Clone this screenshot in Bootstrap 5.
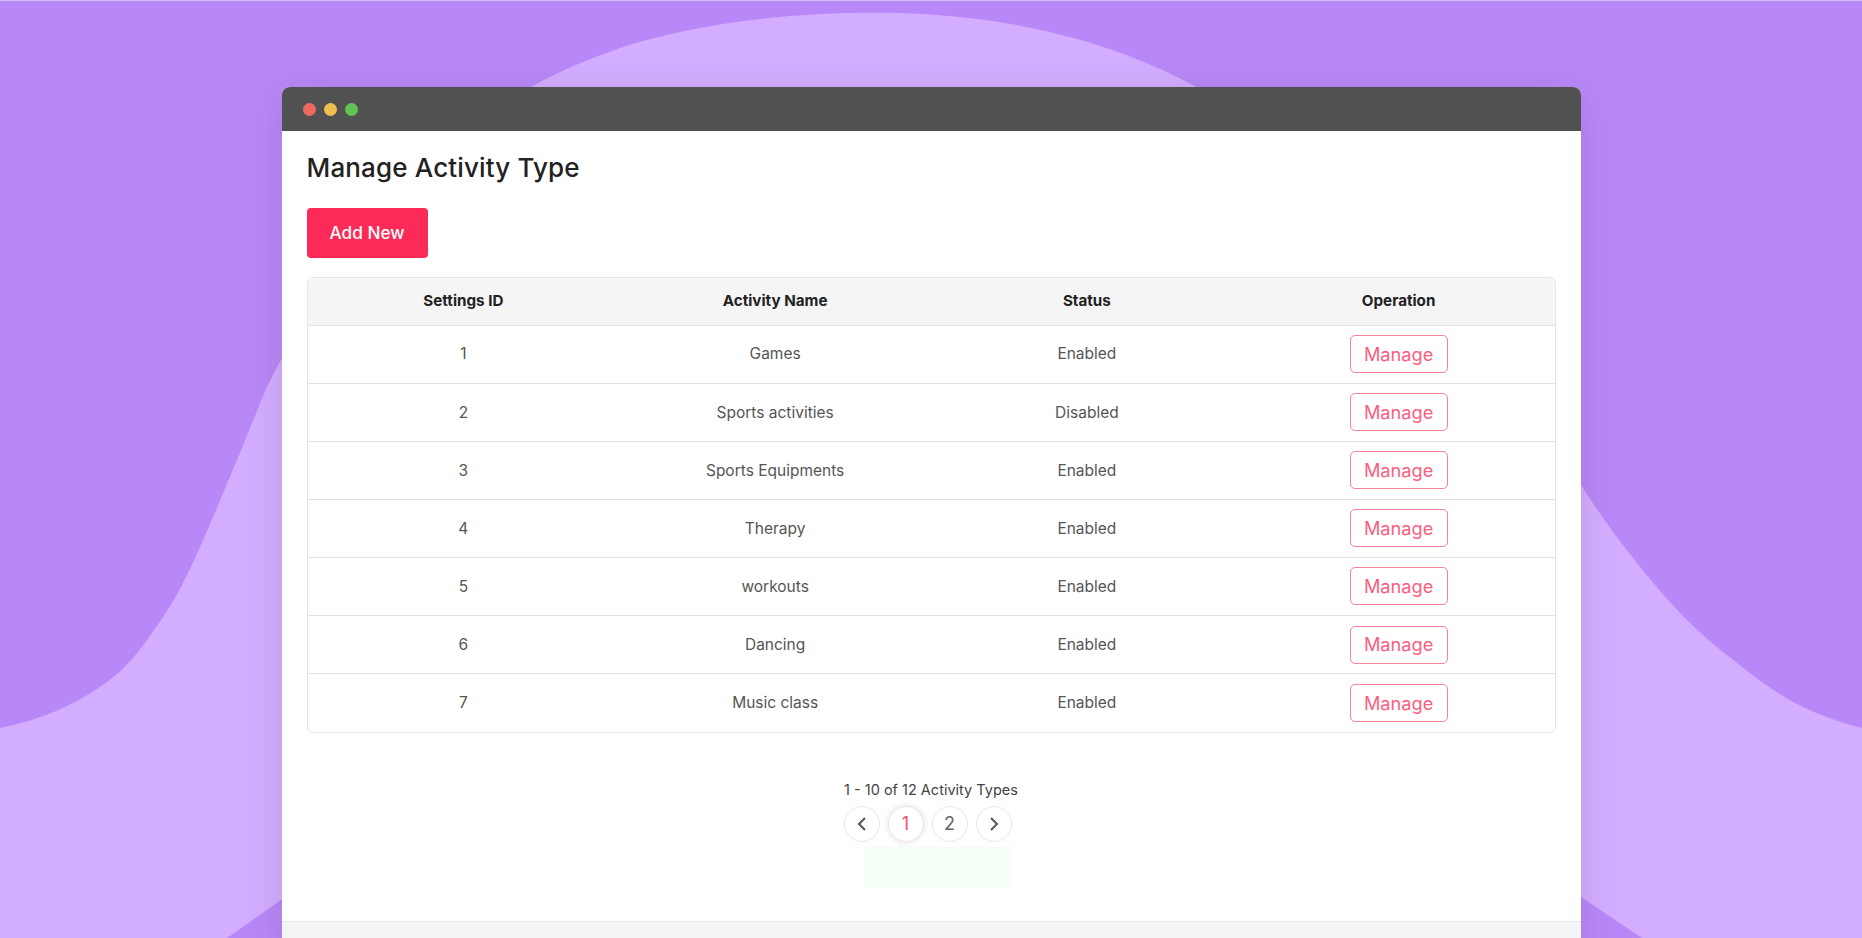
<!DOCTYPE html>
<html lang="en">
<head>
<meta charset="utf-8">
<title>Manage Activity Type</title>
<link href="https://cdn.jsdelivr.net/npm/bootstrap@5.3.0/dist/css/bootstrap.min.css" rel="stylesheet">
<style>
body { font-family: Inter, "Open Sans", sans-serif; background: #b988f8; color: #555; }
.stage { height: 938px; padding-top: 87px; }
.backdrop { position: absolute; top: 0; left: 0; width: 1862px; height: 938px; }
.app-window { width: 1299px; background: #fff; border-radius: 8px 8px 0 0; box-shadow: 0 6px 40px rgba(0,0,0,.11); }
.title-bar { height: 44px; background: #515151; border-radius: 8px 8px 0 0; padding-left: 21px; gap: 8px; }
.dot { width: 13px; height: 13px; border-radius: 50%; }
.dot-r { background: #ee6a5f; } .dot-y { background: #f0bd4f; } .dot-g { background: #60c454; }
.content-area { padding: 0 25px; }
.page-title { font-size: 26px; font-weight: 500; color: #222; margin: 19px 0 0; line-height: 35px; letter-spacing: .15px; }
.btn-add { width: 121px; height: 50px; background: #fb2a57; color: #fff; border: 0; border-radius: 4px; font-size: 17.2px; font-weight: 500; margin-top: 23px; padding: 0; }
.btn-add:hover { background: #fb2a57; color: #fff; }
.table-box { margin-top: 19px; border: 1px solid #e6e6e6; border-radius: 6px; overflow: hidden; }
.activity-table { table-layout: fixed; margin: 0; font-size: 15.5px; color: #555; }
.activity-table th { height: 47px; padding: 0; background: #f5f5f5; color: #222; font-weight: 700; font-size: 15.2px; vertical-align: middle; border-bottom: 1px solid #e6e6e6; }
.activity-table td { height: 58.1px; padding: 0; vertical-align: middle; color: #555; border-bottom: 1px solid #e2e2e2; }
.activity-table tr:last-child td { border-bottom: 0; }
.btn-manage { width: 98px; height: 38px; padding: 0; font-size: 18.2px; line-height: 1; color: #f9607f; background: #fff; border: 1.5px solid #fb8198; border-radius: 5px; }
.btn-manage:hover { color: #f9607f; background: #fff; border-color: #fb8198; }
.pager-block { width: 175px; margin: 47px auto 0; }
.pager-text { font-size: 14.5px; color: #444; line-height: 20px; white-space: nowrap; }
.pager-list { gap: 8px; margin: 6px 0 0; }
.pager-link { width: 36px; height: 36px; padding: 0; border-radius: 50% !important; border: 1px solid #e8e8e8; color: #666; font-size: 18px; line-height: 1; background: #fff; display: flex; align-items: center; justify-content: center; margin: 0 !important; }
.pager-link.is-current { color: #fb4a70; box-shadow: 0 0 4px 2px #eee; }
.notice-strip { width: 148px; height: 42px; background: #f5fff5; margin: 4px 0 0 20px; }
.window-foot { height: 40px; margin-top: 33.5px; background: #f5f5f5; border-top: 1px solid #e8e8e8; }
</style>
</head>
<body>
<div class="stage position-relative overflow-hidden">
  <svg class="backdrop" viewBox="0 0 1862 938" aria-hidden="true">
    <rect width="1862" height="938" fill="#b988f8"/>
    <path fill="#d3adff" d="M0 728 C40 720 72 706 100 687 C118 675 133 660 147 640 C160 622 172 605 183 583 C194 562 203 540 213 517 C222 496 231 474 240 453 C249 431 258 408 267 387 C271 378 276 369 281 360 L531 87 C565 68 600 54 639 42 C720 20 800 12 883 12.7 C940 13 1000 20 1050 32 C1105 45 1155 64 1196 87 L1581 485 C1598 512 1617 538 1637 563 C1653 583 1670 603 1687 620 C1703 636 1720 650 1737 663 C1758 680 1780 696 1803 707 C1822 716 1842 723 1862 728 L1862 938 L1642 938 L1581 897 L281 900 L227 938 L0 938 Z"/>
    <rect width="1862" height="1" fill="#d6bbfd"/>
  </svg>
  <div class="app-window position-relative mx-auto">
    <div class="title-bar d-flex align-items-center">
      <span class="dot dot-r"></span><span class="dot dot-y"></span><span class="dot dot-g"></span>
    </div>
    <div class="content-area">
      <h1 class="page-title">Manage Activity Type</h1>
      <button type="button" class="btn btn-add">Add New</button>
      <div class="table-box">
        <table class="table activity-table text-center">
          <thead>
            <tr><th>Settings ID</th><th>Activity Name</th><th>Status</th><th>Operation</th></tr>
          </thead>
          <tbody>
            <tr><td>1</td><td>Games</td><td>Enabled</td><td><button type="button" class="btn btn-manage">Manage</button></td></tr>
            <tr><td>2</td><td>Sports activities</td><td>Disabled</td><td><button type="button" class="btn btn-manage">Manage</button></td></tr>
            <tr><td>3</td><td>Sports Equipments</td><td>Enabled</td><td><button type="button" class="btn btn-manage">Manage</button></td></tr>
            <tr><td>4</td><td>Therapy</td><td>Enabled</td><td><button type="button" class="btn btn-manage">Manage</button></td></tr>
            <tr><td>5</td><td>workouts</td><td>Enabled</td><td><button type="button" class="btn btn-manage">Manage</button></td></tr>
            <tr><td>6</td><td>Dancing</td><td>Enabled</td><td><button type="button" class="btn btn-manage">Manage</button></td></tr>
            <tr><td>7</td><td>Music class</td><td>Enabled</td><td><button type="button" class="btn btn-manage">Manage</button></td></tr>
          </tbody>
        </table>
      </div>
      <div class="pager-block">
        <div class="pager-text text-center">1 - 10 of 12 Activity Types</div>
        <ul class="pagination pager-list">
          <li class="page-item"><a class="page-link pager-link" href="#" aria-label="Previous"><svg width="12" height="16" viewBox="0 0 12 16"><polyline points="9,2 3,8 9,14" fill="none" stroke="#555" stroke-width="2"/></svg></a></li>
          <li class="page-item"><a class="page-link pager-link is-current" href="#">1</a></li>
          <li class="page-item"><a class="page-link pager-link" href="#">2</a></li>
          <li class="page-item"><a class="page-link pager-link" href="#" aria-label="Next"><svg width="12" height="16" viewBox="0 0 12 16"><polyline points="3,2 9,8 3,14" fill="none" stroke="#555" stroke-width="2"/></svg></a></li>
        </ul>
        <div class="notice-strip"></div>
      </div>
    </div>
    <div class="window-foot"></div>
  </div>
</div>
<script src="https://cdn.jsdelivr.net/npm/bootstrap@5.3.0/dist/js/bootstrap.bundle.min.js"></script>
</body>
</html>
